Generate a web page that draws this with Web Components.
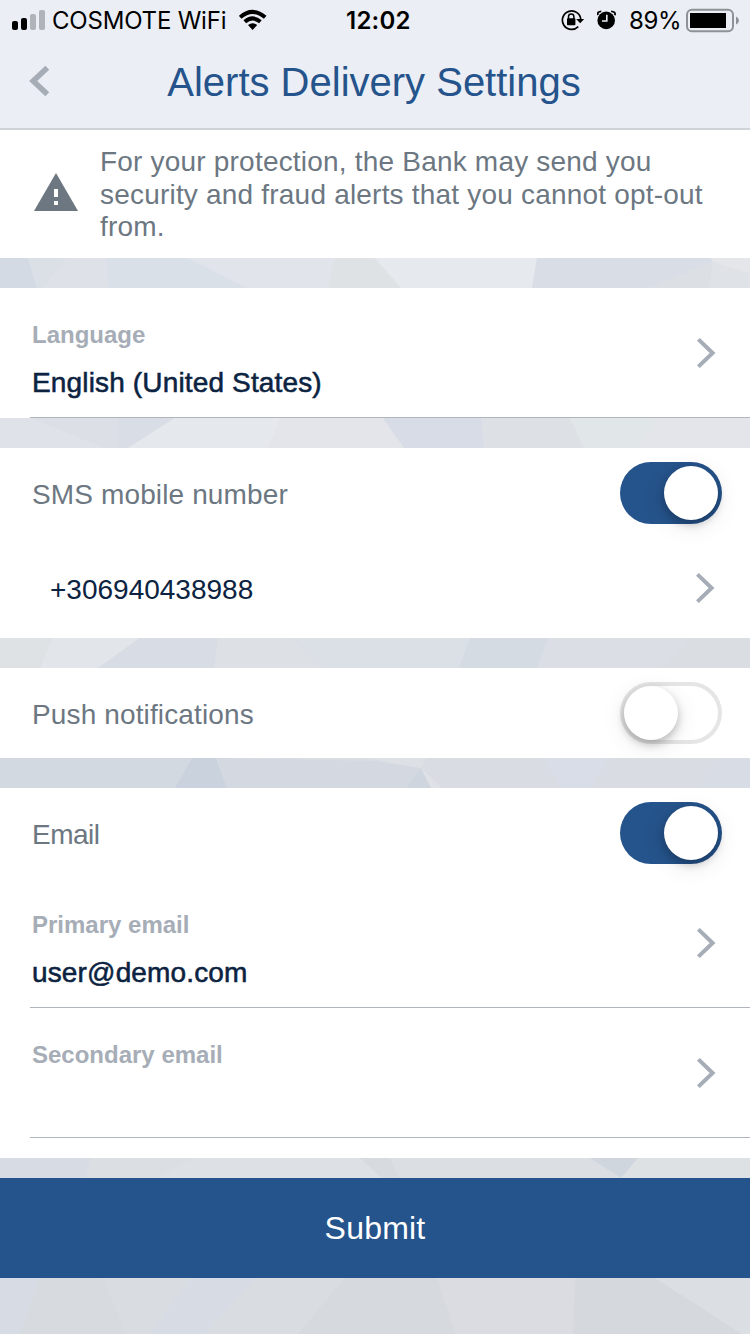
<!DOCTYPE html>
<html lang="en">
<head>
<meta charset="utf-8">
<title>Alerts Delivery Settings</title>
<style>
html,body{margin:0;padding:0}
body{width:750px;height:1334px;overflow:hidden;background:#dbdee3;font-family:"Liberation Sans",Arial,sans-serif;color:#6c7782}
</style>
</head>
<body>
<alerts-screen></alerts-screen>
<script>
const define = (name, html, setup) => customElements.define(name, class extends HTMLElement {
  connectedCallback() {
    if (this.shadowRoot) return;
    const t = document.createElement('template');
    t.innerHTML = html;
    this.attachShadow({ mode: 'open' }).append(t.content.cloneNode(true));
    if (setup) setup(this, this.shadowRoot);
  }
});

define('status-bar', `
<style>
:host{display:flex;height:40px;align-items:center;font:400 24px/40px Inter,sans-serif;color:#000}
svg{display:block;flex:none}
span{box-sizing:border-box;height:40px;padding-top:1px}
.signal{margin-left:12px}
.carrier{margin-left:6px;width:187px;letter-spacing:-.2px;white-space:nowrap}
.time{margin-left:79px;width:92px;font-weight:600;letter-spacing:.25px}
.rot{margin-left:123px}.alarm{margin-left:12px}
.pct{margin-left:12px;width:57px;letter-spacing:-.4px;white-space:nowrap}
</style>
<svg class="signal" width="34" height="40"><rect x="0" y="21" width="6" height="9" rx="2"/><rect x="9" y="18" width="6" height="12" rx="2"/><g fill="#b0b4b8"><rect x="18" y="14" width="6" height="16" rx="2"/><rect x="27" y="10" width="6" height="20" rx="2"/></g></svg>
<span class="carrier">COSMOTE WiFi</span>
<svg width="28" height="40" viewBox="0 0 28 40"><g fill="none" stroke="#000" stroke-width="4"><path d="M1.2 17.3Q13.5 6.5 26.2 17.3"/><path d="M5.8 21.8Q13.5 15.1 21.4 21.8"/></g><path d="M9 25Q13.5 21.5 18.2 25L13.6 30Z"/></svg>
<span class="time">12:02</span>
<svg class="rot" width="24" height="40" viewBox="0 0 24 40"><path d="M17.2 26.6A9.2 9.2 0 1 1 19.8 19.8" fill="none" stroke="#000" stroke-width="1.7"/><path d="M15.2 19H23.2L19.2 23.2Z"/><rect x="6" y="18.3" width="8.4" height="7" rx=".8"/><path d="M7.5 19V16.7a2.7 2.7 0 0 1 5.4 0V19" fill="none" stroke="#000" stroke-width="1.5"/></svg>
<svg class="alarm" width="20" height="40" viewBox="0 0 20 40"><circle cx="9.2" cy="20.4" r="8.8"/><path d="M9.8 14.7V21H5" fill="none" stroke="#ebeef4" stroke-width="1.6"/><path d="M.8 15.2Q0 11.5 4.3 11.3M17.9 15.2Q18.9 11.5 14.1 11.3" fill="none" stroke="#000" stroke-width="1.8"/></svg>
<span class="pct">89%</span>
<svg width="54" height="40" viewBox="0 0 54 40"><rect x="1" y="9.8" width="46" height="21.4" rx="5" fill="none" stroke="#8e9195" stroke-width="2"/><rect x="4" y="13" width="36" height="15"/><path d="M50 16.5Q53 18 53 20.5T50 24.5Z" fill="#8e9195"/></svg>
`);

define('nav-bar', `
<style>
:host{display:grid;grid-template-columns:100px 1fr 100px;height:88px;align-items:center;border-bottom:2px solid #cfd3d9;color:#25538b}
h1{margin:0 -49px 0 -51px;padding-bottom:4px;font:400 40px/48px "Liberation Sans",Arial,sans-serif;text-align:center;white-space:nowrap}
svg{display:block}
</style>
<svg width="60" height="88"><path d="M47.3 27.7L33.2 41L47.3 54.3" fill="none" stroke="#a6adb7" stroke-width="5.6"/></svg>
<h1><slot></slot></h1>
`);

define('notice-box', `
<style>
:host{display:flex;height:128px;background:#fff;align-items:center}
svg{display:block;margin:0 22px 4px 34px;flex:none}
p{margin:0;padding-top:2px;width:620px;font-size:28px;line-height:32.5px;letter-spacing:.2px}
</style>
<svg width="44" height="40" viewBox="0 0 44 40"><path d="M22 1L44 39H0Z" fill="#6c7782"/><path d="M20 17h4v8h-4zM20 29h4v4h-4z" fill="#fff"/></svg>
<p><slot></slot></p>
`);

// Low-poly backdrop strip visible between the cards.
const FACETS = {
  a: [30, '#dfe2e7', ['0,0 28,0 37,30 0,30 #d3dae4','28,0 67,0 43,30 37,30 #dbe0e6','67,0 106,0 108,30 43,30 #dee2e8','106,0 188,0 247,30 108,30 #dae0e7','188,0 335,0 328,30 247,30 #e1e4ea','335,0 372,0 401,30 328,30 #dfe2e5','375,0 537,0 532,30 401,30 #e6e9ed','537,0 711,0 713,4 649,30 532,30 #d9dde6','713,4 649,30 709,30 #dcdfe4','713,4 709,30 750,30 750,15 #dfe2e6','711,0 750,0 750,15 713,4 #e4e6ea']],
  b: [30, '#e2e5e8', ['0,0 30,0 104,30 0,30 #dfe3e9','30,0 117,0 119,30 104,30 #dce0e6','117,0 175,0 128,30 119,30 #d9dde5','175,0 281,0 268,30 128,30 #e5e8ec','281,0 383,0 404,30 268,30 #e4e5ea','383,0 482,0 484,30 404,30 #d7dce6','482,0 570,0 584,30 484,30 #dde1e5','570,0 660,0 638,30 584,30 #e1e6e8','660,0 750,0 750,30 638,30 #e4e5ea']],
  c: [30, '#dbdee4', ['0,0 52,0 40,30 0,30 #dee2e5','52,0 140,0 98,30 40,30 #e2e5e9','140,0 218,0 214,30 98,30 #d8dde5','218,0 292,0 323,30 214,30 #dde1e5','292,0 470,0 459,30 323,30 #dbdfe6','470,0 548,0 537,30 459,30 #d5dbe3','690,0 750,0 750,30 660,30 #dadee2']],
  d: [30, '#d9dde3', ['0,0 192,0 175,30 0,30 #d3d9e1','192,0 216,0 227,30 175,30 #cad2dd','216,0 375,3 421,10 406,30 227,30 #d3d8e1','365,0 426,0 421,10 #dde0e5','421,10 431,30 406,30 #ced5df','421,10 442,30 431,30 #dfe1e6','542,0 610,0 590,30 562,30 #d9dde7','720,0 750,0 750,30 700,30 #d8dde5']],
  e: [20, '#dbdfe3', ['0,0 91,0 86,20 0,20 #d7dce4','193,0 360,0 382,20 156,20 #dde0e4','360,0 390,0 399,20 382,20 #d7dbe0','590,0 638,0 621,20 #cfd6de','638,0 750,0 750,20 621,20 #dde1e4']],
  f: [56, '#d9dde2', ['0,0 40,0 20,56 0,56 #d6dbe4','40,0 103,0 126,56 20,56 #d7dbdf','190,0 255,0 205,56 150,56 #d7dbe4','345,0 437,0 456,56 298,56 #d6d9de','437,0 575,0 573,56 456,56 #dadce1','575,0 655,0 742,56 573,56 #d5d8dc','655,0 750,0 750,56 742,56 #dbdee3']]
};
define('facet-band', `<style>:host{display:block}svg{display:block}</style><svg width="750"></svg>`, (el, root) => {
  const [h, bg, list] = FACETS[el.getAttribute('name')];
  const svg = root.querySelector('svg');
  svg.setAttribute('height', h);
  svg.innerHTML = `<rect width="750" height="${h}" fill="${bg}"/>` + list.map(s => {
    const i = s.lastIndexOf(' ');
    return `<polygon points="${s.slice(0, i)}" fill="${s.slice(i + 1)}"/>`;
  }).join('');
});

define('chevron-icon', `<style>:host{display:block;flex:none}svg{display:block}</style>
<svg width="20" height="30" viewBox="0 0 20 30"><path d="M2.4 1.4L16.6 15L2.4 28.6" fill="none" stroke="#a6adb7" stroke-width="4"/></svg>`);

define('setting-field', `
<style>
:host{display:flex;box-sizing:border-box;height:130px;margin-left:30px;border-bottom:1px solid #b1b6be;align-items:center;padding:0 34px 0 2px}
.text{flex:1;padding-top:14px}
.label{font-size:24px;font-weight:700;line-height:28px;color:#a6adb7}
.value{font-size:28px;line-height:32px;height:32px;margin-top:18px;color:#0b2341;letter-spacing:.15px;-webkit-text-stroke:.55px #0b2341}
</style>
<div class="text"><div class="label"><slot name="label"></slot></div><div class="value"><slot></slot></div></div>
<chevron-icon></chevron-icon>
`);

define('toggle-switch', `
<style>
:host{display:flex;box-sizing:border-box;width:102px;height:62px;border-radius:31px;padding:4px;background:#fff;box-shadow:inset 0 0 0 4px #e5e5e5;flex:none}
:host([on]){background:#25538b;box-shadow:none;justify-content:flex-end}
i{display:block;width:54px;height:54px;border-radius:50%;background:#fff;box-shadow:0 4px 8px rgba(0,0,0,.23),0 6px 24px rgba(0,0,0,.1)}
</style><i></i>
`);

define('toggle-row', `
<style>
:host{display:flex;height:90px;align-items:center;padding:0 28px 0 32px;font-size:28px;letter-spacing:var(--ls,.13px)}
span{flex:1;padding-top:4px}
</style><span><slot></slot></span><slot name="control"></slot>
`);

define('number-row', `
<style>
:host{display:flex;height:100px;align-items:center;padding:0 35px 0 50px;font-size:28px;color:#0b2341}
span{flex:1;padding-top:3px}
</style><span><slot></slot></span><chevron-icon></chevron-icon>
`);

define('settings-card', `<style>:host{display:block;box-sizing:border-box;background:#fff}</style><slot></slot>`);

define('submit-button', `
<style>
:host{display:block}
button{display:block;width:100%;height:100px;border:0;margin:0;padding:0;background:#25538b;color:#fff;font:400 32px/100px "Liberation Sans",Arial,sans-serif;letter-spacing:.2px}
</style><button><slot></slot></button>
`);

define('alerts-screen', `
<style>
:host{display:block;width:750px;height:1334px;overflow:hidden}
header{background:#ebeef4}
.last{padding-bottom:20px}
.email{--ls:-.5px}
</style>
<header><status-bar></status-bar><nav-bar>Alerts Delivery Settings</nav-bar></header>
<notice-box>For your protection, the Bank may send you security and fraud alerts that you cannot opt-out from.</notice-box>
<facet-band name="a"></facet-band>
<settings-card><setting-field><span slot="label">Language</span>English (United States)</setting-field></settings-card>
<facet-band name="b"></facet-band>
<settings-card>
<toggle-row>SMS mobile number<toggle-switch slot="control" on></toggle-switch></toggle-row>
<number-row>+306940438988</number-row>
</settings-card>
<facet-band name="c"></facet-band>
<settings-card><toggle-row>Push notifications<toggle-switch slot="control"></toggle-switch></toggle-row></settings-card>
<facet-band name="d"></facet-band>
<settings-card class="last">
<toggle-row class="email">Email<toggle-switch slot="control" on></toggle-switch></toggle-row>
<setting-field><span slot="label">Primary email</span>user@demo.com</setting-field>
<setting-field><span slot="label">Secondary email</span></setting-field>
</settings-card>
<facet-band name="e"></facet-band>
<submit-button>Submit</submit-button>
<facet-band name="f"></facet-band>
`);
</script>
</body>
</html>
